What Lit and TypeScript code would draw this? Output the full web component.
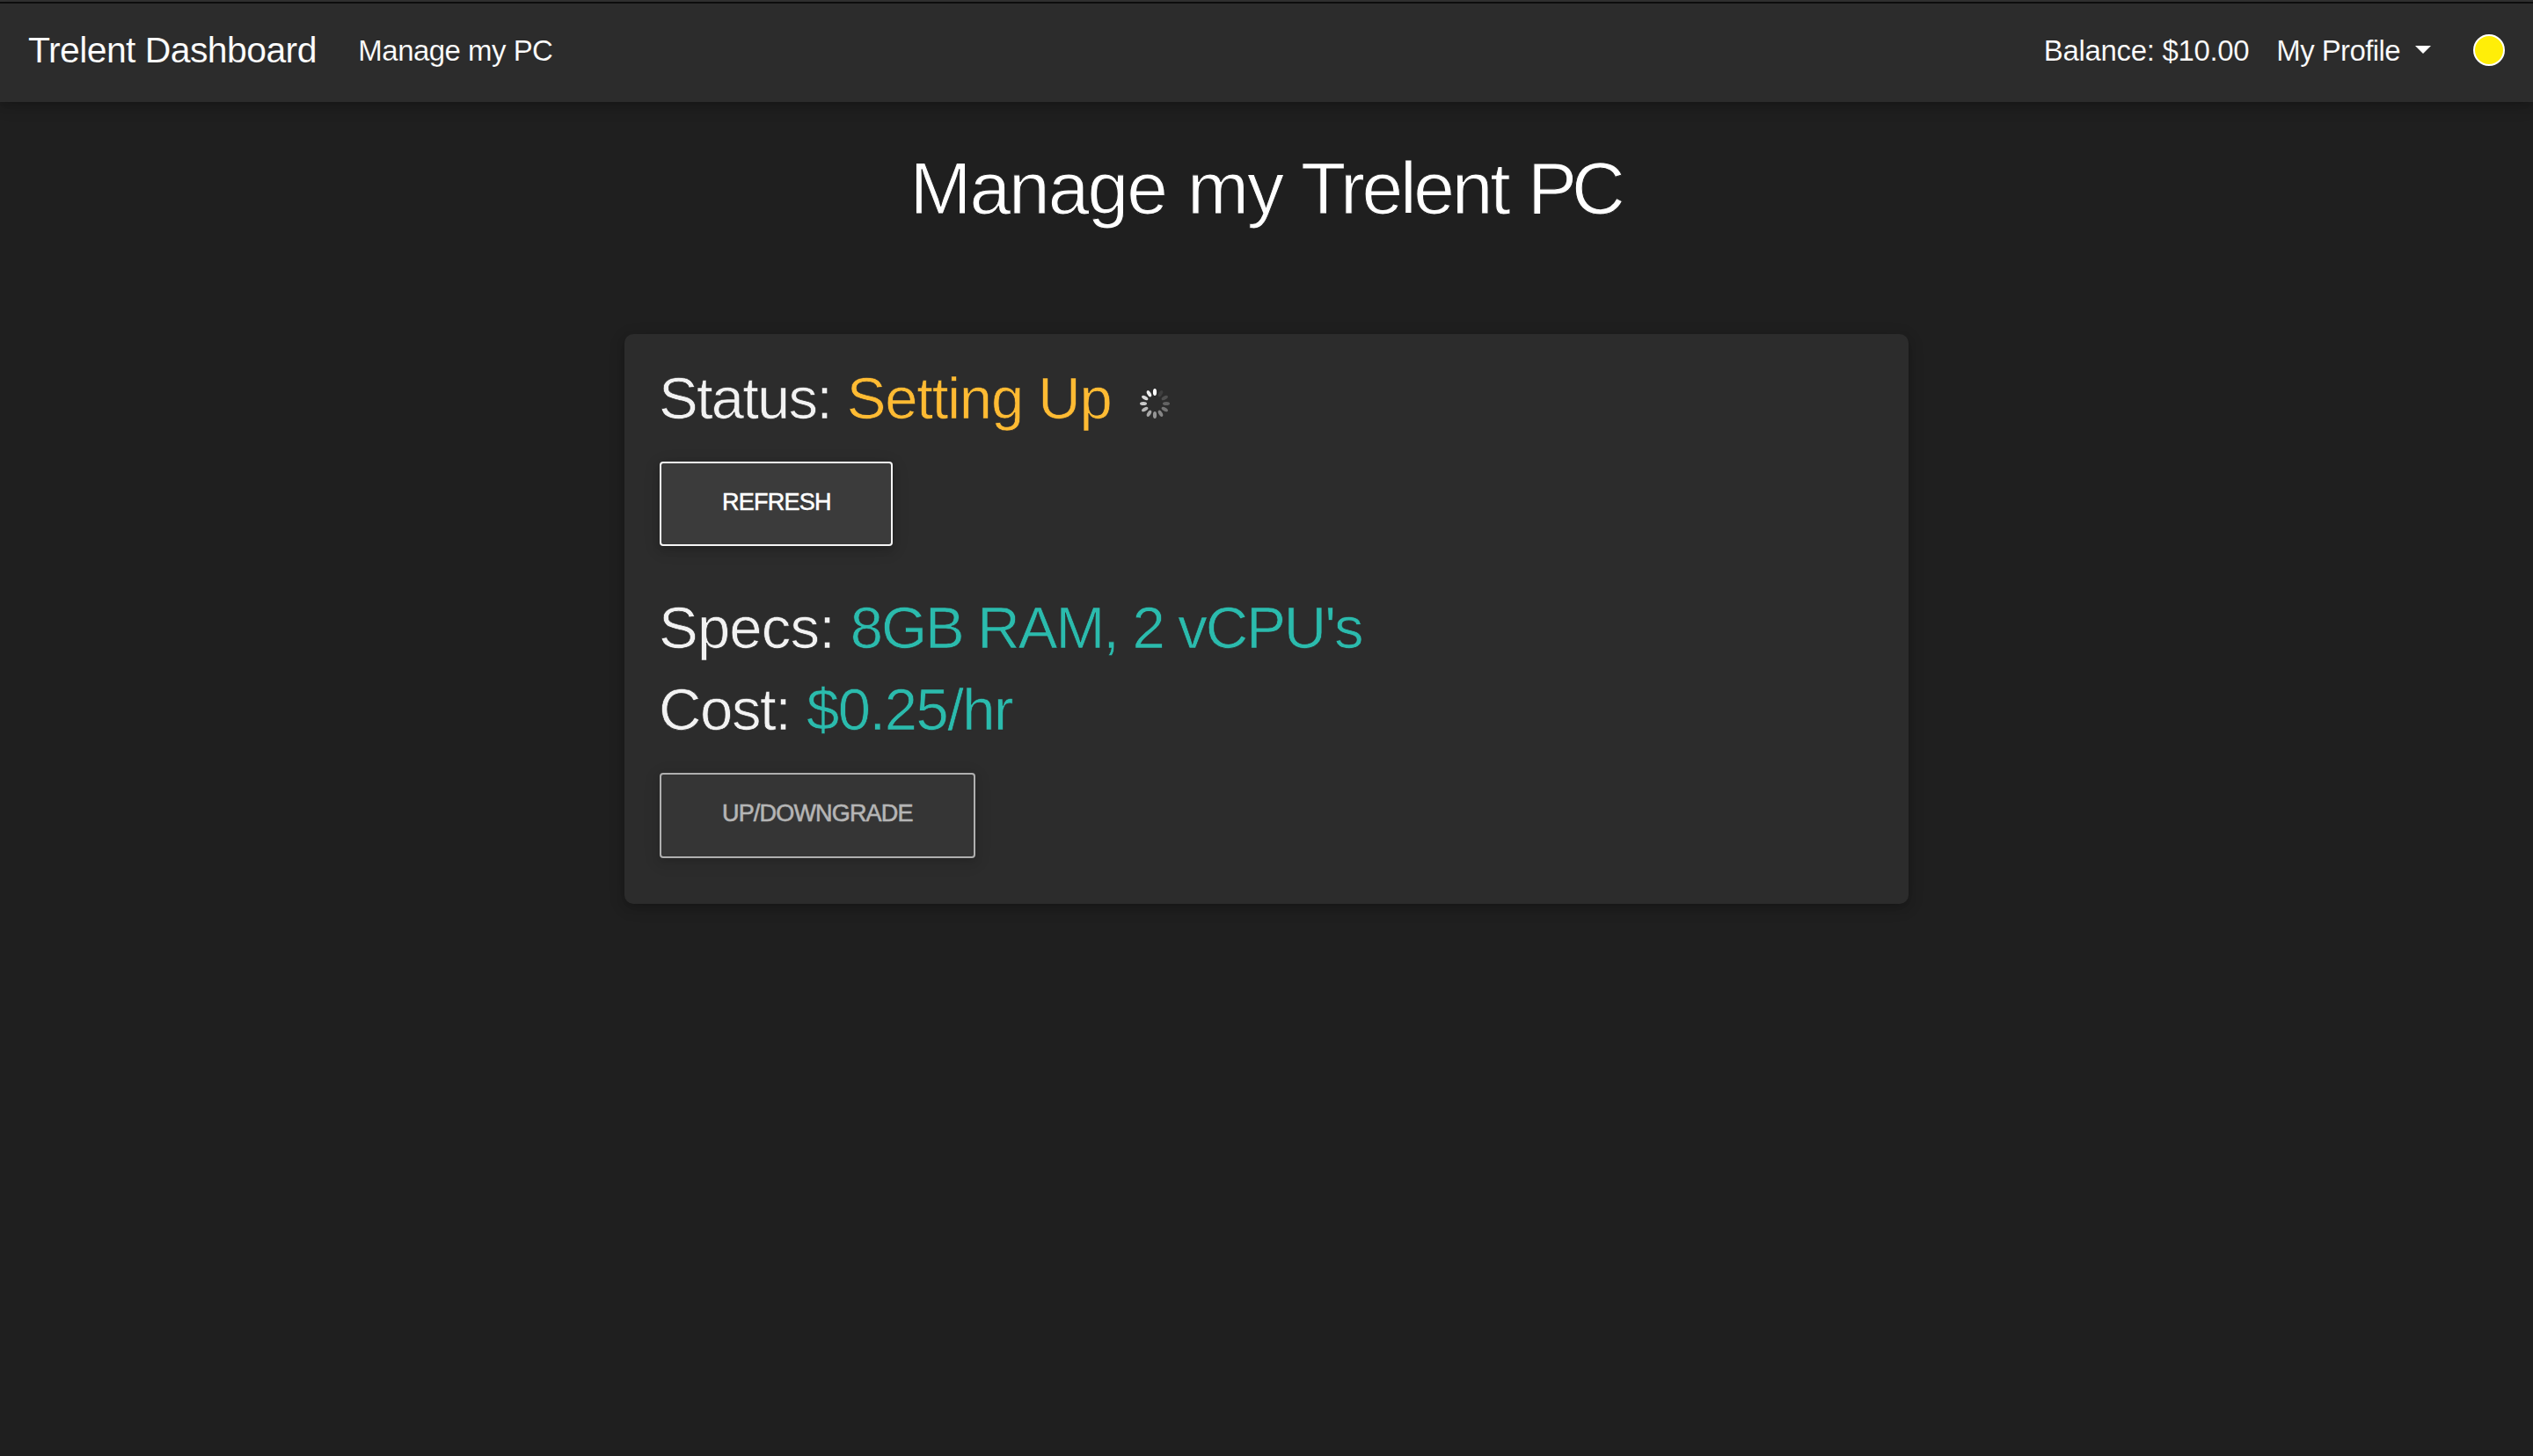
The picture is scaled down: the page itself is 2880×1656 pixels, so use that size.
import { LitElement, html, svg, css } from "lit";
import { customElement } from "lit/decorators.js";

// Spoke brightness, clockwise from twelve o'clock.
const SPOKES = ["#ffffff", "#3f3f3f", "#505050", "#636363", "#747474", "#868686", "#959595", "#a6a6a6", "#b8b8b8", "#cacaca", "#dadada", "#ededed"];

@customElement("loading-spinner")
export class LoadingSpinner extends LitElement {
  static styles = css`
    :host { display: block; width: 34px; height: 34px; }
    svg { display: block; width: 34px; height: 34px; }
  `;
  render() {
    return html`<svg viewBox="-17 -17 34 34">
      ${SPOKES.map((c, i) => svg`<ellipse cx="0" cy="-13" rx="2.1" ry="4" fill=${c} transform=${`rotate(${i * 30})`}></ellipse>`)}
    </svg>`;
  }
}

@customElement("app-root")
export class AppRoot extends LitElement {
  static styles = css`
    :host {
      display: block;
      min-height: 1656px;
      background: #1f1f1f;
      color: #fff;
      font-family: "Liberation Sans", Arial, sans-serif;
      --raised: 0 4px 10px rgba(0, 0, 0, 0.16), 0 4px 20px rgba(0, 0, 0, 0.12);
    }
    * { box-sizing: border-box; }
    .edge { height: 4px; background: #323232; border-bottom: 2px solid #0f0f0f; }
    .nav {
      display: flex;
      align-items: center;
      height: 112px;
      padding: 0 32px 6px;
      background: #2c2c2c;
      box-shadow: var(--raised);
      white-space: nowrap;
      font-size: 33px;
      line-height: 40px;
      -webkit-text-stroke: 0.15px #2c2c2c;
    }
    .brand { font-size: 41px; line-height: 48px; letter-spacing: -0.6px; }
    .link { margin: 2px 0 0 47.5px; letter-spacing: -0.53px; }
    .balance { margin: 2px 31px 0 auto; letter-spacing: -0.34px; }
    .profile { margin-top: 2px; letter-spacing: -0.6px; }
    .caret {
      margin: 0 48px 2px 17px;
      border: 9.4px solid transparent;
      border-top-color: #fff;
      border-bottom: 0;
    }
    .dot { width: 36px; height: 36px; border: 2px solid #fff; border-radius: 50%; background: #ffee08; }
    .title {
      margin: 50px 0 118px;
      padding-right: 4px;
      text-align: center;
      font-size: 84px;
      font-weight: 400;
      line-height: 96px;
      letter-spacing: -3.3px;
      word-spacing: 2.6px;
      -webkit-text-stroke: 1.1px #1f1f1f;
    }
    .wide { letter-spacing: -2px; }
    .tight { letter-spacing: -6px; }
    .card {
      width: 1460px;
      height: 648px;
      margin: 0 auto;
      padding: 33px 40px 0;
      border-radius: 10px;
      background: #2c2c2c;
      box-shadow: var(--raised);
    }
    .row {
      display: flex;
      align-items: center;
      height: 93px;
      margin-left: -1px;
      color: #f2f2f2;
      font-size: 67px;
      line-height: 80px;
      white-space: nowrap;
      -webkit-text-stroke: 0.7px #2c2c2c;
    }
    .status { height: 80px; }
    .value { margin-left: 17.6px; color: #2bbbad; }
    .amber { color: #ffbb33; }
    .t1 { letter-spacing: -1.77px; }
    .t2 { letter-spacing: -1.2px; }
    .t3 { letter-spacing: -0.8px; }
    .t4 { letter-spacing: -2px; }
    .t5 { letter-spacing: -1.35px; }
    .t6 { margin-left: 18.4px; letter-spacing: -1.5px; }
    loading-spinner { margin: 12px 0 0 32px; }
    .btn {
      display: block;
      width: 265px;
      height: 96px;
      margin: 32px 0 46px;
      padding: 0 0 5px 69px;
      border: 2px solid #f5f5f5;
      border-radius: 4px;
      background: #3b3b3b;
      box-shadow: var(--raised);
      color: #fff;
      font: 400 27px/32px "Liberation Sans", Arial, sans-serif;
      letter-spacing: -0.75px;
      text-align: left;
      white-space: nowrap;
      -webkit-text-stroke: 0.5px currentColor;
    }
    .btn:disabled { width: 359px; height: 97px; margin: 26px 0 0; letter-spacing: -0.82px; opacity: 0.65; }
  `;
  render() {
    return html`
      <div class="edge"></div>
      <nav class="nav">
        <span class="brand">Trelent Dashboard</span>
        <span class="link">Manage my PC</span>
        <span class="balance">Balance: $10.00</span>
        <span class="profile">My Profile</span>
        <span class="caret"></span>
        <span class="dot"></span>
      </nav>
      <h1 class="title"><span class="wide">Manage my</span> Trelent <span class="tight">PC</span></h1>
      <section class="card">
        <div class="row status">
          <span class="t1">Status:</span><span class="value amber t2">Setting Up</span>
          <loading-spinner></loading-spinner>
        </div>
        <button class="btn">REFRESH</button>
        <div class="row"><span class="t3">Specs:</span><span class="value t4">8GB RAM, 2 vCPU's</span></div>
        <div class="row"><span class="t5">Cost:</span><span class="value t6">$0.25/hr</span></div>
        <button class="btn" disabled>UP/DOWNGRADE</button>
      </section>
    `;
  }
}
